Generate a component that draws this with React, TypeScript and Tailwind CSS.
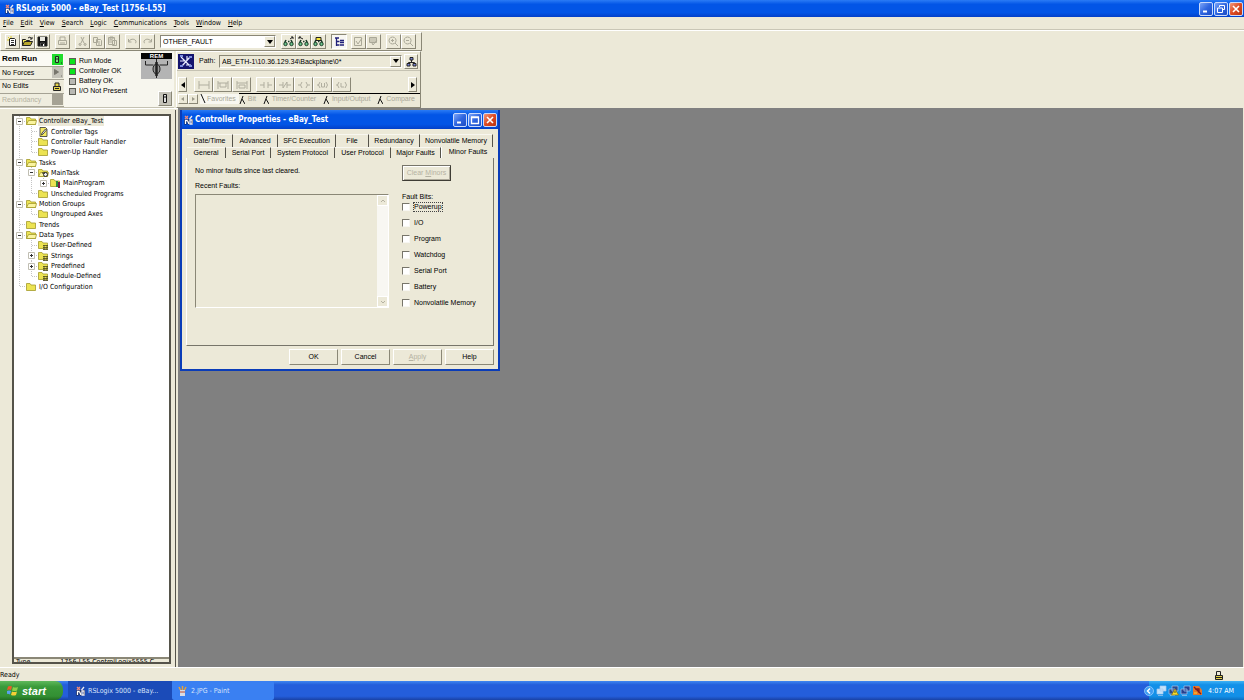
import type { ReactNode } from "react";

const UI_FONT = "font-['DejaVu_Sans_Condensed','DejaVu_Sans',sans-serif]";
const DIALOG_FONT = "font-['Liberation_Sans',Arial,sans-serif]";

const RAISED = "border border-t-white border-l-white border-r-[#8a8776] border-b-[#8a8776]";
const SUNKEN = "border border-t-[#8a8776] border-l-[#8a8776] border-r-white border-b-white";

export default function App() {
  return (
    <main className={`flex min-h-screen flex-col bg-[#ece9d8] text-[7px] leading-[10px] text-black ${UI_FONT}`}>
      <TitleBar />
      <MenuBar />
      <Toolbars />
      <div className="flex flex-1">
        <ControllerOrganizer />
        <section className="relative mr-px flex-1 bg-[#808080]">
          <PropertiesDialog />
        </section>
      </div>
      <footer className="flex h-[14px] items-center justify-between border-t border-white pr-[20px]">
        <span>Ready</span>
        <LockIcon />
      </footer>
      <Taskbar />
    </main>
  );
}

/* ---------- window chrome ---------- */

function TitleBar() {
  return (
    <header className="flex h-[17px] items-center bg-[linear-gradient(#2a7bf5,#0255e6_25%,#0255e6_75%,#0340c8)] pr-px pl-[5px] text-white">
      <AppIcon />
      <h1 className="ml-[2px] text-[8px] font-bold">RSLogix 5000 - eBay_Test [1756-L55]</h1>
      <div className="ml-auto flex gap-px">
        <CaptionButton kind="minimize" />
        <CaptionButton kind="restore" />
        <CaptionButton kind="close" />
      </div>
    </header>
  );
}

function CaptionButton({ kind }: { kind: "minimize" | "maximize" | "restore" | "close" }) {
  return (
    <button
      type="button"
      aria-label={kind}
      className={[
        "flex h-[14px] w-[14px] items-center justify-center rounded-[2px] border border-[#c9dafc]",
        kind === "close"
          ? "bg-[linear-gradient(135deg,#f0987c,#dd4a22_50%,#b83412)]"
          : "bg-[linear-gradient(135deg,#7ba4f7,#2f66e0_50%,#1c4cc4)]",
      ].join(" ")}
    >
      <svg width="10" height="10" viewBox="0 0 10 10" fill="none" stroke="#fff">
        {kind === "minimize" && <path d="M2 7.5h4" strokeWidth="2" />}
        {kind === "maximize" && <path d="M1.5 2.5h7v6h-7zM1 2h8" strokeWidth="1.3" />}
        {kind === "restore" && <path d="M3.5 3V1.5h5v4H7M1.5 4h5v4.5h-5z" strokeWidth="1" />}
        {kind === "close" && <path d="M2 2l6 6M8 2L2 8" strokeWidth="1.6" />}
      </svg>
    </button>
  );
}

const MENUS = [
  ["F", "ile"],
  ["E", "dit"],
  ["V", "iew"],
  ["S", "earch"],
  ["L", "ogic"],
  ["C", "ommunications"],
  ["T", "ools"],
  ["W", "indow"],
  ["H", "elp"],
];

function MenuBar() {
  return (
    <nav className="flex h-[13px] items-center gap-[7px] border-b border-[#c9c6b6] pl-[3px]">
      {MENUS.map(([key, rest]) => (
        <button key={rest} type="button">
          <u>{key}</u>
          {rest}
        </button>
      ))}
    </nav>
  );
}

/* ---------- toolbars ---------- */

function Toolbars() {
  return (
    <div className="flex h-[78px] flex-col border-t border-white pt-px">
      <div className={`flex h-[19px] w-[422px] items-center pl-1 ${RAISED}`}>
        <div className="flex">
          <ToolButton label="New"><NewIcon /></ToolButton>
          <ToolButton label="Open"><OpenIcon /></ToolButton>
          <ToolButton label="Save"><SaveIcon /></ToolButton>
        </div>
        <div className="ml-[5px] flex">
          <ToolButton label="Print" disabled>
            <path d="M3 4V1h5v3M1.500 4.500h8v4h-8zM3 7h5" />
          </ToolButton>
        </div>
        <div className="ml-[5px] flex">
          <ToolButton label="Cut" disabled>
            <path d="M4 1l3 6M7 1L4 7M3 7.500a1 1 0 1 0 .1 0M8 7.500a1 1 0 1 0 .1 0" />
          </ToolButton>
          <ToolButton label="Copy" disabled>
            <path d="M1.500 1.500h4v5h-4zM4.500 3.500h4l1 1v5h-5zM6 6h2M6 8h2" />
          </ToolButton>
          <ToolButton label="Paste" disabled>
            <path d="M1.500 1.500h6v7h-6zM3 1h3v2H3zM5.500 4.500h4v5h-4zM2 4h3M2 6h3" />
          </ToolButton>
        </div>
        <div className="ml-[5px] flex">
          <ToolButton label="Undo" disabled>
            <path d="M1.500 3v3h3M1.500 6C3 3 7 2 9 5c0 1 0 2-1 2" />
          </ToolButton>
          <ToolButton label="Redo" disabled>
            <path d="M9.500 3v3h-3M9.500 6C8 3 4 2 2 5c0 1 0 2 1 2" />
          </ToolButton>
        </div>
        <div className="ml-[5px] w-[116px]">
          <ComboBox label="Find in routine" value="OTHER_FAULT" className="bg-white" />
        </div>
        <div className="ml-[5px] flex">
          <ToolButton label="Find previous"><Binoculars mark="M7 3l3-2M8 1h2v2" /></ToolButton>
          <ToolButton label="Find next"><Binoculars mark="M1 1l4 2M1 3V1h2" /></ToolButton>
          <ToolButton label="Find all"><Binoculars mark="M3 1.500h5v3H3z" fill="#f6e63c" /></ToolButton>
        </div>
        <button type="button" aria-label="Show organizer" className={`ml-[5px] flex h-[15px] w-[16px] items-center justify-center bg-[#f8f7f2] ${SUNKEN}`}>
          <svg width="11" height="11" viewBox="0 0 11 11" fill="none" stroke="#20207a" strokeWidth="1.300">
            <path d="M1 2h4M2.500 2v8M2.500 5.500h3M2.500 9h3M6 4.500h4M6 6.500h4M6 9h4" />
          </svg>
        </button>
        <div className="ml-[4px] flex">
          <ToolButton label="Verify routine" disabled>
            <path d="M1.500 1.500h7v8h-7zM3 5l2 3 4-6" />
          </ToolButton>
          <ToolButton label="Verify controller" disabled>
            <path d="M1.500 1.500h7v5h-7zM2 3h6M2 5h6M4 7l1 2 4-5" />
          </ToolButton>
        </div>
        <div className="ml-[5px] flex">
          <ToolButton label="Zoom in" disabled>
            <path d="M4.500 1a3.500 3.500 0 1 0 .1 0M7 7l3 3M3 4.500h3M4.500 3v3" />
          </ToolButton>
          <ToolButton label="Zoom out" disabled>
            <path d="M4.500 1a3.500 3.500 0 1 0 .1 0M7 7l3 3M3 4.500h3" />
          </ToolButton>
        </div>
      </div>
      <div className="flex flex-1">
        <OnlinePanel />
        <div className={`ml-[2px] flex w-[245px] flex-col ${RAISED}`}>
          <PathBar />
          <InstructionBar />
        </div>
      </div>
    </div>
  );
}

function ToolButton({ label, disabled, children }: { label: string; disabled?: boolean; children: ReactNode }) {
  return (
    <button
      type="button"
      aria-label={label}
      disabled={disabled}
      className={`flex h-[15px] w-[15px] items-center justify-center ${RAISED}`}
    >
      <svg width="11" height="11" viewBox="0 0 11 11" fill="none" stroke={disabled ? "#aaa898" : "#222"} strokeWidth="1">
        {children}
      </svg>
    </button>
  );
}

function ComboBox({ label, value, className }: { label: string; value: string; className: string }) {
  return (
    <div className={`relative ${SUNKEN}`}>
      <select
        aria-label={label}
        className={`block h-[11px] w-full appearance-none pl-[2px] text-[7px] leading-[11px] ${DIALOG_FONT} ${className}`}
      >
        <option>{value}</option>
      </select>
      <span className={`pointer-events-none absolute top-0 right-0 flex h-[11px] w-[11px] items-center justify-center bg-[#ece9d8] ${RAISED}`}>
        <svg width="6" height="4" viewBox="0 0 6 4"><path d="M0 0h6L3 4z" /></svg>
      </span>
    </div>
  );
}

const ONLINE_ROWS = [
  { label: "Rem Run", tone: "bg-[#fbfaf4] font-bold text-[8px]", cell: "bg-[#1fdc2c]" },
  { label: "No Forces", tone: "", cell: "bg-[#c4c2b8]" },
  { label: "No Edits", tone: "", cell: "bg-[#ece9d8]" },
  { label: "Redundancy", tone: "text-[#b5b2a2]", cell: "bg-[#a5a294]" },
];

const LEDS = [
  { label: "Run Mode", color: "bg-[#0be31c]" },
  { label: "Controller OK", color: "bg-[#0be31c]" },
  { label: "Battery OK", color: "bg-[#b9b9b4]" },
  { label: "I/O Not Present", color: "bg-[#b9b9b4]" },
];

function OnlinePanel() {
  return (
    <section className={`flex w-[174px] border-b border-[#c5c2b2] bg-[#f7f6ee] pt-[2px] ${DIALOG_FONT}`}>
      <ul className="flex w-[64px] flex-col bg-[#efeddf]">
        {ONLINE_ROWS.map((row, i) => (
          <li key={row.label} className={`flex flex-1 items-center justify-between border-b border-[#a5a294] pr-px pl-[2px] ${row.tone}`}>
            {row.label}
            <span className={`flex h-[11px] w-[11px] items-center justify-center ${row.cell}`}>
              <svg width="11" height="11" viewBox="0 0 11 11" fill="none" stroke="#222">
                {i === 0 && <path d="M3.500 2.500h3v6h-3zM4 5h2M9 9h1" fill="#7be27f" />}
                {i === 1 && <path d="M2.500 2.500v5l4-2.500zM9 9h1" fill="#77756c" stroke="#77756c" />}
                {i === 2 && <path d="M3 5V2h4v3M1.500 5.500h7v4h-7zM3 7.500h4" fill="#e5d34b" />}
              </svg>
            </span>
          </li>
        ))}
      </ul>
      <ul className="mt-[3px] ml-[5px] flex w-[66px] flex-col">
        {LEDS.map((led) => (
          <li key={led.label} className="flex h-[10px] items-center gap-[3px] whitespace-nowrap">
            <span className={`h-[7px] w-[7px] border border-[#5d5d55] ${led.color}`} />
            {led.label}
          </li>
        ))}
      </ul>
      <div className="ml-auto flex flex-col items-end justify-between pr-[2px] pb-px">
        <div className="relative h-[26px] w-[31px] bg-[#b4b4b4]">
          <svg width="31" height="26" viewBox="0 0 31 26" fill="none" stroke="#222">
            <path d="M0 0h31v6H0z" fill="#050505" stroke="none" />
            <path d="M4.500 8v4h8M26.500 8v4h-8M15.500 6v3M15.500 22v3" />
            <ellipse cx="15.500" cy="16" rx="3.500" ry="5" fill="#999" />
            <path d="M15.500 9v14" strokeWidth="2.500" />
          </svg>
          <span className="absolute inset-x-0 top-0 text-center text-[6px] leading-[6px] font-bold text-white">REM</span>
        </div>
        <button type="button" aria-label="Controller" className={`flex h-[15px] w-[14px] items-center justify-center bg-[#c4c2b8] ${RAISED}`}>
          <svg width="8" height="11" viewBox="0 0 8 11" fill="#ddd" stroke="#111"><path d="M2.500 1.500h3v8h-3zM3 4h2" /></svg>
        </button>
      </div>
    </section>
  );
}

function PathBar() {
  return (
    <div className={`flex h-[19px] items-center border-b border-[#c5c2b2] pl-px ${DIALOG_FONT}`}>
      <svg width="16" height="15" viewBox="0 0 16 15" stroke="#e9ecff" strokeWidth="1.200" fill="none">
        <path d="M0 0h16v15H0z" fill="#14146e" stroke="none" />
        <path d="M3 3l9 9M12 3l-8 9M2 7h5M9 2v4M8 11h5" />
        <path d="M2 2h3M11 3h3M2 12h3M11 12h3" stroke="#7d8de0" strokeWidth="2" />
      </svg>
      <span className="ml-[5px] w-[20px]">Path:</span>
      <div className="w-[183px]">
        <ComboBox label="Path" value="AB_ETH-1\10.36.129.34\Backplane\0*" className="bg-[#ece9d8]" />
      </div>
      <button type="button" aria-label="Who active" className={`ml-[2px] flex h-[15px] w-[14px] items-center justify-center ${RAISED}`}>
        <svg width="11" height="11" viewBox="0 0 11 11" fill="#7a86d8" stroke="#222">
          <path d="M5.500 4v2.500M2.500 8V6.500h6V8" fill="none" />
          <path d="M4 1.500h3V4H4zM1 7.500h3V10H1zM7 7.500h3V10H7z" />
        </svg>
      </button>
    </div>
  );
}

const RUNGS = ["M1 1v8M1 5h10M11 1v8", "M1 1v8M1 3h10M11 1v8M3 3v4h6V3", "M1 1v8M1 3h10M11 1v8M3 5h6v3H3z"];
const CONTACTS = [
  "M0 5h4M4 2v6M8 2v6M8 5h4",
  "M0 5h4M4 2v6M8 2v6M8 5h4M4 8l4-6",
  "M0 5h2M4 2Q1 5 4 8M8 2q3 3 0 6M10 5h2",
  "M0 5h2M3 2Q0 5 3 8M9 2q3 3 0 6M4.500 3v4h3V3",
  "M0 5h2M3 2Q0 5 3 8M9 2q3 3 0 6M5 3v4h3",
];

function InstructionBar() {
  return (
    <div className="flex flex-1 flex-col justify-end pb-[3px] pl-px">
      <div className="flex h-[17px] items-center">
        <ScrollArrow dir="left" />
        <div className="ml-[7px] flex">
          {RUNGS.map((d) => <InstructionButton key={d} d={d} />)}
        </div>
        <div className="ml-[5px] flex">
          {CONTACTS.map((d) => <InstructionButton key={d} d={d} />)}
        </div>
        <div className="mr-[3px] ml-auto">
          <ScrollArrow dir="right" />
        </div>
      </div>
      <div className={`flex h-[11px] items-center text-[#aaa898] ${DIALOG_FONT}`}>
        <SmallArrow d="M4 1L1 3l3 2z" />
        <SmallArrow d="M2 1l3 2-3 2z" />
        <button type="button" className="ml-[2px] flex items-center gap-px bg-[#f8f7f0] pr-[3px]">
          <TabEdge d="M1 0l4 9" />
          Favorites
        </button>
        <div className="flex flex-1 items-center justify-between border-t border-black pr-[5px]">
          {["Bit", "Timer/Counter", "Input/Output", "Compare"].map((tab) => (
            <button key={tab} type="button" className="flex items-center gap-[3px]">
              <TabEdge d="M1 9l3-8M3 4l3 5" />
              {tab}
            </button>
          ))}
        </div>
      </div>
    </div>
  );
}

function TabEdge({ d }: { d: string }) {
  return (
    <svg width="6" height="9" viewBox="0 0 6 9" fill="none" stroke="#111"><path d={d} /></svg>
  );
}

function InstructionButton({ d }: { d: string }) {
  return (
    <button type="button" disabled aria-label="Instruction" className={`flex h-[15px] w-[19px] items-center justify-center ${RAISED}`}>
      <svg width="12" height="10" viewBox="0 0 12 10" fill="none" stroke="#b0ae9f"><path d={d} /></svg>
    </button>
  );
}

function ScrollArrow({ dir }: { dir: "left" | "right" }) {
  return (
    <button type="button" aria-label={`Scroll ${dir}`} className={`flex h-[15px] w-[9px] items-center justify-center ${RAISED}`}>
      <svg width="4" height="6" viewBox="0 0 4 6"><path d={dir === "left" ? "M4 0v6L0 3z" : "M0 0v6l4-3z"} /></svg>
    </button>
  );
}

function SmallArrow({ d }: { d: string }) {
  return (
    <button type="button" aria-label="Scroll tabs" className={`flex h-[10px] w-[10px] items-center justify-center ${RAISED}`}>
      <svg width="6" height="6" viewBox="0 0 6 6" fill="#9b998a"><path d={d} /></svg>
    </button>
  );
}

/* ---------- controller organizer ---------- */

type Cell = "line" | "tee" | "end" | "plus" | "minus" | "plus-end";
type Folder = "open" | "closed" | "tags" | "task" | "program" | "types";

const TREE: { label: string; cells: Cell[]; icon: Folder; selected?: boolean }[] = [
  { label: "Controller eBay_Test", cells: ["minus"], icon: "open", selected: true },
  { label: "Controller Tags", cells: ["line", "tee"], icon: "tags" },
  { label: "Controller Fault Handler", cells: ["line", "tee"], icon: "closed" },
  { label: "Power-Up Handler", cells: ["line", "end"], icon: "closed" },
  { label: "Tasks", cells: ["minus"], icon: "open" },
  { label: "MainTask", cells: ["line", "minus"], icon: "task" },
  { label: "MainProgram", cells: ["line", "line", "plus-end"], icon: "program" },
  { label: "Unscheduled Programs", cells: ["line", "end"], icon: "closed" },
  { label: "Motion Groups", cells: ["minus"], icon: "open" },
  { label: "Ungrouped Axes", cells: ["line", "end"], icon: "closed" },
  { label: "Trends", cells: ["tee"], icon: "closed" },
  { label: "Data Types", cells: ["minus"], icon: "open" },
  { label: "User-Defined", cells: ["line", "tee"], icon: "types" },
  { label: "Strings", cells: ["line", "plus"], icon: "types" },
  { label: "Predefined", cells: ["line", "plus"], icon: "types" },
  { label: "Module-Defined", cells: ["line", "end"], icon: "types" },
  { label: "I/O Configuration", cells: ["end"], icon: "closed" },
];

function ControllerOrganizer() {
  return (
    <aside className="flex w-[178px] border-t border-white pt-[5px] pr-[2px] pb-[3px]">
      <div className="mr-[4px] ml-[12px] flex flex-1 flex-col border-2 border-[#55534a] bg-white">
        <ul role="tree" className="grid h-44 auto-rows-fr">
          {TREE.map((node) => (
            <li key={node.label} role="treeitem" aria-selected={!!node.selected} className="flex items-center">
              {node.cells.map((cell, i) => <TreeCell key={i} cell={cell} />)}
              <FolderIcon kind={node.icon} />
              <span className={`ml-px px-px whitespace-nowrap ${node.selected ? "bg-[#ece9d8]" : ""}`}>{node.label}</span>
            </li>
          ))}
        </ul>
        <div className="mt-auto h-[5px] overflow-hidden border-t-2 border-[#8a8776] bg-[#ece9d8]">
          <div className="flex gap-[30px] pl-[2px] leading-[7px]">
            <span>Type</span>
            <span className="whitespace-nowrap">1756-L55 ControlLogix5555 C</span>
          </div>
        </div>
      </div>
      <div className="-my-1 w-px bg-[#55534a]" />
    </aside>
  );
}

function TreeCell({ cell }: { cell: Cell }) {
  const box = cell.startsWith("plus") || cell === "minus";
  const short = cell.endsWith("end");
  return (
    <svg width="12" height="11" viewBox="0 0 12 11" fill="none" className="shrink-0">
      <path d={short ? "M5.500 0v6" : "M5.500 0v11"} stroke="#c4c4c4" strokeDasharray="1 1" />
      {cell !== "line" && <path d="M6 5.500h6" stroke="#c4c4c4" strokeDasharray="1 1" />}
      {box && <path d="M2.500 2.500h6v6h-6z" fill="#fff" stroke="#c0beb2" />}
      {box && <path d={cell === "minus" ? "M4 5.500h3" : "M4 5.500h3M5.500 4v3"} stroke="#333" />}
    </svg>
  );
}

function FolderIcon({ kind }: { kind: Folder }) {
  return (
    <svg width="11" height="10" viewBox="0 0 11 10" className="shrink-0" stroke="#a39a2c" strokeWidth=".8">
      {kind === "tags" ? (
        <>
          <path d="M2 .5h5.500L9 2v7.500H2z" fill="#f4ea62" stroke="#333" />
          <path d="M3.500 8L4 6l3.500-4 1 1L5 7z" fill="#fff" stroke="#222" />
        </>
      ) : (
        <path d="M.5 8.500v-7h3.500l1 1.500h4.500v5.500z" fill="#ece352" />
      )}
      {(kind === "open" || kind === "task") && <path d="M.5 8.500L2.500 4.500h8l-1 4z" fill="#faf4a0" />}
      {kind === "task" && <path d="M5.500 6.500a2 2 0 1 0 4 0 2 2 0 1 0-4 0M4 5h3" fill="#eee" stroke="#222" strokeWidth="1" />}
      {kind === "program" && (
        <>
          <path d="M7 3v6" stroke="#2b8a3a" strokeWidth="2" />
          <path d="M9 4v6" stroke="#7c1d4a" strokeWidth="2" />
        </>
      )}
      {kind === "types" && <path d="M5 5.500h5M5 7.500h5M5 9.500h5M6 5v5M9 5v5" stroke="#4c4a20" />}
    </svg>
  );
}

/* ---------- controller properties dialog ---------- */

const TABS_BACK = [
  { label: "Date/Time", width: "w-[46px]" },
  { label: "Advanced", width: "w-[45px]" },
  { label: "SFC Execution", width: "w-[58px]" },
  { label: "File", width: "w-[33px]" },
  { label: "Redundancy", width: "w-[51px]" },
  { label: "Nonvolatile Memory", width: "w-[73px]" },
];

const TABS_FRONT = [
  { label: "General", width: "w-[39px]" },
  { label: "Serial Port", width: "w-[45px]" },
  { label: "System Protocol", width: "w-[64px]" },
  { label: "User Protocol", width: "w-[56px]" },
  { label: "Major Faults", width: "w-[50px]" },
];

const FAULT_BITS = ["Powerup", "I/O", "Program", "Watchdog", "Serial Port", "Battery", "Nonvolatile Memory"];

function PropertiesDialog() {
  return (
    <div
      role="dialog"
      aria-label="Controller Properties - eBay_Test"
      className="absolute top-[2px] left-[2px] w-[320px] border-2 border-t-0 border-[#0a3cb8] bg-[#ece9d8]"
    >
      <div className="flex h-[19px] items-center bg-[linear-gradient(#2a7bf5,#0255e6_25%,#0255e6_75%,#0340c8)] pr-px pl-[2px] text-white">
        <AppIcon />
        <h2 className="ml-[2px] text-[8px] font-bold">Controller Properties - eBay_Test</h2>
        <div className="ml-auto flex gap-px">
          <CaptionButton kind="minimize" />
          <CaptionButton kind="maximize" />
          <CaptionButton kind="close" />
        </div>
      </div>
      <div className={`px-[4px] pt-[5px] pb-[4px] ${DIALOG_FONT}`}>
        <div role="tablist" className="flex flex-col pl-px">
          <div className="flex h-[13px]">
            {TABS_BACK.map((tab) => <Tab key={tab.label} {...tab} />)}
          </div>
          <div className="flex h-[11px]">
            {TABS_FRONT.map((tab) => <Tab key={tab.label} {...tab} />)}
            <button type="button" role="tab" aria-selected className="flex-1 border-l border-white pb-px">
              Minor Faults
            </button>
          </div>
        </div>
        <div role="tabpanel" className="flex h-[188px] border border-t-0 border-l-white border-r-[#77756a] border-b-[#77756a] pt-[6px] pl-[8px]">
          <div className="w-[194px]">
            <p className="leading-[13px]">No minor faults since last cleared.</p>
            <p className="mt-[2px] leading-[13px]">Recent Faults:</p>
            <div className={`mt-[2px] flex h-[114px] justify-end ${SUNKEN}`}>
              <div className="flex w-[11px] flex-col justify-between bg-[#f8f7f2]">
                <ListArrow label="Scroll up" d="M1 4l2-2 2 2" />
                <ListArrow label="Scroll down" d="M1 2l2 2 2-2" />
              </div>
            </div>
          </div>
          <div className="mt-px ml-[13px]">
            <button type="button" disabled className="block h-[16px] w-[49px] border border-t-[#77756a] border-l-[#77756a] border-r-[#3f3d35] border-b-[#3f3d35] text-[#b5b2a2] shadow-[inset_1px_1px_#fff,inset_-1px_-1px_#aca899]">
              Clear <u>M</u>inors
            </button>
            <p className="mt-[10px] leading-[11px]">Fault Bits:</p>
            <div className="flex flex-col gap-[6px]">
              {FAULT_BITS.map((bit, i) => (
                <label key={bit} className="flex h-[10px] items-center gap-[3px]">
                  <input type="checkbox" className="h-[8px] w-[8px] appearance-none border border-t-[#77756a] border-l-[#77756a] border-r-[#f8f7f2] border-b-[#f8f7f2] bg-white checked:bg-[#222]" />
                  <span className={`border border-dotted whitespace-nowrap leading-[8px] ${i === 0 ? "border-[#444]" : "border-transparent"}`}>{bit}</span>
                </label>
              ))}
            </div>
          </div>
        </div>
        <div className="mt-[3px] flex justify-end gap-[3px]">
          <DialogButton>OK</DialogButton>
          <DialogButton>Cancel</DialogButton>
          <DialogButton disabled><u>A</u>pply</DialogButton>
          <DialogButton>Help</DialogButton>
        </div>
      </div>
    </div>
  );
}

function Tab({ label, width }: { label: string; width: string }) {
  return (
    <button type="button" role="tab" aria-selected={false} className={`border-t border-r border-t-[#f8f7f0] border-r-[#55534a] whitespace-nowrap ${width}`}>
      {label}
    </button>
  );
}

function ListArrow({ label, d }: { label: string; d: string }) {
  return (
    <button type="button" aria-label={label} disabled className="flex h-[11px] w-[11px] items-center justify-center border border-white bg-[#ece9d8]">
      <svg width="6" height="6" viewBox="0 0 6 6" fill="none" stroke="#b5b2a2"><path d={d} /></svg>
    </button>
  );
}

function DialogButton({ disabled, children }: { disabled?: boolean; children: ReactNode }) {
  return (
    <button type="button" disabled={disabled} className={`h-[16px] w-[49px] disabled:text-[#b5b2a2] ${RAISED}`}>
      {children}
    </button>
  );
}

/* ---------- taskbar ---------- */

function Taskbar() {
  return (
    <div className="flex h-[19px] items-stretch bg-[linear-gradient(#3f86f0,#245edb_20%,#245edb_80%,#1941a5)] text-white">
      <button
        type="button"
        className={`flex w-[63px] items-center gap-[4px] rounded-r-[8px] bg-[linear-gradient(#5fb95c,#3a9a3a_30%,#338f33_80%,#226e22)] pl-[7px] text-[11px] font-bold italic ${DIALOG_FONT}`}
      >
        <svg width="11" height="11" viewBox="0 0 11 11">
          <path d="M1 1.500q2-1 4 0L4 5Q2 4 0 5z" fill="#ee5a2a" />
          <path d="M6 2q2 1 5 0l-1 3.500q-2 1-5 0z" fill="#8bd14a" />
          <path d="M0 6q2-1 4 0L3 9.500Q1 8.500 0 9z" fill="#5aa0ee" />
          <path d="M5 6.500q2 1 5 0L9 10q-2 1-5 0z" fill="#f7cf35" />
        </svg>
        start
      </button>
      <button type="button" className="ml-[5px] flex w-[104px] items-center gap-[3px] bg-[#1b4bb8] pl-[8px] text-[#d7e3fb]">
        <AppIcon />
        RSLogix 5000 - eBay...
      </button>
      <button type="button" className="flex w-[102px] items-center gap-[4px] rounded-[2px] bg-[#3a80f2] pl-[6px] text-[#d7e3fb]">
        <svg width="9" height="10" viewBox="0 0 9 10">
          <path d="M2 4h5v6H2z" fill="#d9dbe4" />
          <path d="M2.500 4L1 1M4.500 4V0M6.500 4L8 1" stroke="#e5a13a" strokeWidth="1.500" />
          <path d="M2 6h5" stroke="#c2492e" />
        </svg>
        2.JPG - Paint
      </button>
      <div className="ml-auto flex items-center bg-[linear-gradient(#3fb2f5,#1290e8_20%,#1290e8_80%,#0d6fc0)] pr-[10px]">
        <svg width="10" height="10" viewBox="0 0 10 10" className="-ml-[5px]" fill="none" stroke="#fff">
          <circle cx="5" cy="5" r="4.500" fill="#3d9cf2" stroke="#a8d8ff" strokeWidth=".7" />
          <path d="M6 2.500L3.500 5 6 7.500" strokeWidth="1.500" />
        </svg>
        <div className="ml-[2px] flex gap-px">
          <TrayIcon screen="#c4e2fa" />
          <TrayIcon screen="#2b4a8c">
            <path d="M7 4l3.500 6h-7z" fill="#f7dd2c" stroke="#8a6d10" />
            <path d="M7 6v2" stroke="#111" />
          </TrayIcon>
          <TrayIcon screen="#27408f" />
          <svg width="11" height="11" viewBox="0 0 11 11" fill="none">
            <path d="M1 1h6l3 4v5H1z" fill="#e8752a" />
            <path d="M3 4h4v4M2 2l7 7" stroke="#7c1d1d" strokeWidth="1.300" />
            <path d="M2 8h3" stroke="#f7dd2c" />
          </svg>
        </div>
        <time className="ml-[5px] whitespace-nowrap">4:07 AM</time>
      </div>
    </div>
  );
}

function TrayIcon({ screen, children }: { screen: string; children?: ReactNode }) {
  return (
    <svg width="11" height="11" viewBox="0 0 11 11" stroke="#a9c8ee" strokeWidth=".7" fill={screen}>
      <path d="M4 1h6v5H4zM1 4h6v5H1z" fillRule="nonzero" />
      <path d="M2 10.500h5" />
      {children}
    </svg>
  );
}

/* ---------- icons ---------- */

function AppIcon() {
  return (
    <svg width="9" height="10" viewBox="0 0 9 10" fill="none" strokeWidth="1.300" className="shrink-0">
      <path d="M1.500 9.500V5.500h2.500L5 9.500M5.500 5h2.500v4" stroke="#10163a" strokeWidth="2.200" />
      <path d="M1.500 9V5.500h2M3.500 5.500L5 9" stroke="#fff" />
      <path d="M1 1l3 3M4 1L1 4" stroke="#f08a7a" />
      <path d="M8 1L5.500 4M6 5h2v4H6z" stroke="#e8e8f2" />
    </svg>
  );
}

function NewIcon() {
  return (
    <>
      <path d="M2.500 2.500h5l1 1v6h-6z" fill="#fff" />
      <path d="M4 4.500h3M4 6.500h3M4 8.500h3" stroke="#333" />
      <path d="M1 1l2 2M4 0v2M0 4h2" stroke="#d9c727" />
    </>
  );
}

function OpenIcon() {
  return (
    <>
      <path d="M.5 9.500v-6h3l1 1h3v5z" fill="#f3e95c" />
      <path d="M.5 9.500l2-4h8l-2 4z" fill="#b9a82c" />
      <path d="M6 2q2-2 3.500.500M10 1v2H8" />
    </>
  );
}

function SaveIcon() {
  return (
    <>
      <path d="M1 1h9v9H1z" fill="#111" />
      <path d="M3 1h5v4H3z" fill="#e8e8e0" stroke="none" />
      <path d="M3.500 7h4v3h-4z" fill="#111" stroke="#777" strokeWidth=".6" />
      <path d="M6.500 8v2" stroke="#fff" />
    </>
  );
}

function Binoculars({ mark, fill = "none" }: { mark: string; fill?: string }) {
  return (
    <>
      <path d="M3 4L1.500 7M8 4l1.500 3M5 5.500h1.500" strokeWidth="1.600" stroke="#1c3d2a" />
      <circle cx="2.500" cy="8" r="1.700" fill="#6cc38a" stroke="#1c3d2a" />
      <circle cx="8.500" cy="8" r="1.700" fill="#6cc38a" stroke="#1c3d2a" />
      <path d={mark} fill={fill} />
    </>
  );
}

function LockIcon() {
  return (
    <svg width="10" height="10" viewBox="0 0 10 10" fill="none" stroke="#222">
      <path d="M2.500 5V1.500h4V5" />
      <path d="M1.500 5.500h7v4h-7z" fill="#e5d34b" />
      <path d="M2 7.500h6" />
    </svg>
  );
}
